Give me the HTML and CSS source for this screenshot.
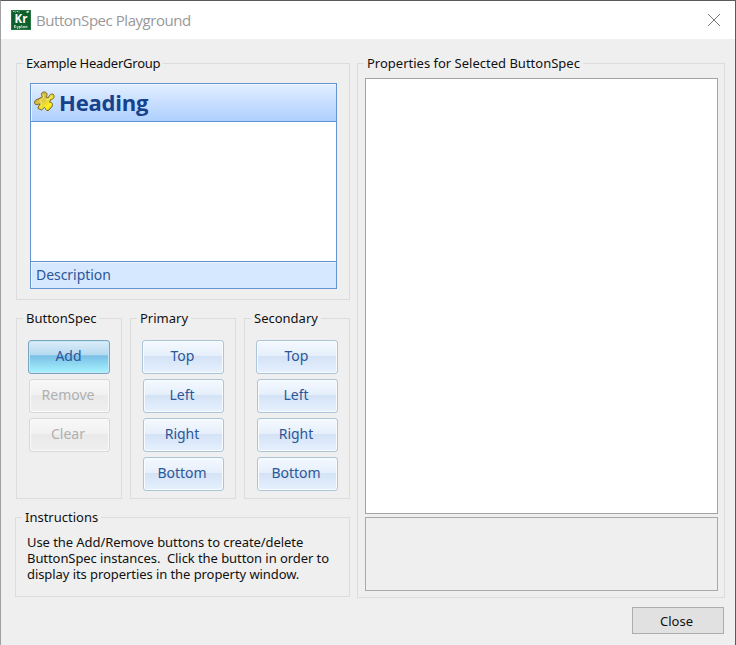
FILE: index.html
```html
<!DOCTYPE html>
<html lang="en">
<head>
<meta charset="utf-8">
<title>ButtonSpec Playground</title>
<link rel="stylesheet" href="styles.css">
</head>
<body>
<div class="window">
  <header class="titlebar">
    <svg class="app-icon" width="20" height="20" viewBox="0 0 20 20">
      <rect width="20" height="20" fill="#0d602c"/>
      <rect x=".5" y=".5" width="19" height="19" fill="none" stroke="#287443"/>
      <path d="M2 1.500H3.500M4.200 2H5M5.700 1.500H7M7.600 2H8.500M15.500 1.500H18M15.500 2.500H17.500" stroke="#d5e5da" stroke-width=".9"/>
      <text x="10" y="13" font-size="11.500" text-anchor="middle">Kr</text>
      <path d="M3.500 15V18M5 15L3.800 16.500L5 18M6 16V17.500M7.300 16L6.300 19M8.300 16V19M8.300 16.300H9.500V17.700H8.500M10.800 15V17.700H11.700M12.500 16.300H13.600V17.700H12.500ZM14.800 18V16.300H16V18" fill="none" stroke="#e8f2eb" stroke-width=".7"/>
    </svg>
    <h1 class="title">ButtonSpec Playground</h1>
    <svg class="close-x" width="12" height="12" viewBox="0 0 12 12"><path d="M0 0L12 12M12 0L0 12" stroke="#777" fill="none"/></svg>
  </header>
  <main class="content">
    <div class="left">
      <section class="group example">
        <h2 class="legend l-example">Example HeaderGroup</h2>
        <div class="header-group">
          <div class="heading">
            <svg width="21" height="21" viewBox="0 0 21 21">
              <defs><linearGradient id="gold" x1="0" y1="0" x2="1" y2="1"><stop offset="0" stop-color="#b99b35"/><stop offset=".45" stop-color="#dfc947"/><stop offset=".75" stop-color="#fff21b"/><stop offset="1" stop-color="#9a8728"/></linearGradient></defs>
              <path d="M8.500 5.500C6 3 8 .8 10.500 1C13.500 1.500 13.500 4 12 6L14.500 6.700C15 4 17.500 2 19.500 3.500C21 6 19.500 8.500 16.500 8.800L15.700 11.300C18.500 11 19 13.500 18 15.500L14.500 19.500C11.500 20.500 12 17 10.500 16.500C9 16.500 9 18.800 7.500 19L4 17.500C3.500 15.500 6 14.500 5.800 13C4.500 12.500 3.500 14.500 1.500 13.500C-.5 11.500 1 8.500 4 8.200Z" fill="url(#gold)" stroke="#75651f"/>
              <path d="M9 3L9.500 7L5.500 10L8 11L7 16M12 9L15 8L18 5" fill="none" stroke="#fff5a0" stroke-width=".9" opacity=".7"/>
            </svg>
            <span class="heading-text">Heading</span>
          </div>
          <div class="canvas"></div>
          <div class="description"><span>Description</span></div>
        </div>
      </section>
      <div class="columns">
        <section class="group">
          <h2 class="legend">ButtonSpec</h2>
          <div class="buttons">
            <button class="btn wide active">Add</button>
            <button class="btn" disabled>Remove</button>
            <button class="btn" disabled>Clear</button>
          </div>
        </section>
        <section class="group">
          <h2 class="legend">Primary</h2>
          <div class="buttons">
            <button class="btn wide">Top</button>
            <button class="btn">Left</button>
            <button class="btn">Right</button>
            <button class="btn">Bottom</button>
          </div>
        </section>
        <section class="group">
          <h2 class="legend">Secondary</h2>
          <div class="buttons">
            <button class="btn wide">Top</button>
            <button class="btn">Left</button>
            <button class="btn">Right</button>
            <button class="btn">Bottom</button>
          </div>
        </section>
      </div>
      <section class="group instructions">
        <h2 class="legend">Instructions</h2>
        <p>Use the Add/Remove buttons to create/delete<br>ButtonSpec instances.&nbsp; Click the button in order to<br>display its properties in the property window.</p>
      </section>
    </div>
    <section class="group properties">
      <h2 class="legend">Properties for Selected ButtonSpec</h2>
      <div class="grid-box"></div>
      <div class="help-box"></div>
    </section>
  </main>
  <footer class="footer"><button class="close-btn">Close</button></footer>
</div>
</body>
</html>
```

FILE: styles.css
```css
* { box-sizing: border-box; }
body { margin: 0; font-family: "Noto Sans", sans-serif; color: #111; }
h1, h2, p { margin: 0; font-weight: 400; }
button { font-family: inherit; padding: 0; }

.window {
  width: 736px; height: 645px; overflow: hidden;
  display: flex; flex-direction: column;
  background: #efefef;
  border: solid #5b595d; border-width: 1px 1px 0;
  border-left-color: #a09fa4;
}
.titlebar {
  height: 38px; flex: none; background: #fff;
  display: flex; align-items: center; padding: 0 15px 0 10px;
}
.app-icon { display: block; }
.app-icon text { font-family: "Open Sans", sans-serif; font-weight: 700; fill: #fff; }
.title { font: 400 15px/20px "Open Sans", sans-serif; letter-spacing: -.45px; color: #999; margin-left: 5px; white-space: nowrap; }
.close-x { margin-left: auto; }

.content { display: flex; height: 558px; flex: none; padding: 24px 10px 0 14px; gap: 8px; }
.left { width: 335px; display: flex; flex-direction: column; gap: 18px; }
.group { border: 1px solid #dcdcdc; }
.example { height: 237px; margin-left: 1px; }
.legend {
  width: max-content; height: 16px; margin: -9px 0 0 6px; padding: 0 3px;
  background: #efefef; font-size: 13px; line-height: 16px; white-space: nowrap;
}
.l-example { letter-spacing: -.25px; }
.header-group {
  width: 307px; height: 206px; margin: 12px 0 0 13px;
  display: flex; flex-direction: column;
  border: 1px solid #6593cf; background: #fff;
}
.heading {
  height: 38px; flex: none; display: flex; align-items: center; padding-left: 3px; gap: 4px;
  background: linear-gradient(#e3efff, #c8deff 50%, #afd0ff);
  box-shadow: inset 1px 1px #edf5ff; border-bottom: 1px solid #6593cf;
}
.heading svg { margin-top: -2px; }
.heading-text { font: 700 22px/30px "Open Sans", sans-serif; letter-spacing: -.2px; color: #15428b; padding-bottom: 2px; }
.canvas { flex: 1; }
.description {
  height: 27px; flex: none; padding-left: 5px; border-top: 1px solid #6593cf;
  background: #d6e8ff; box-shadow: inset 1px 1px #edf5ff;
  font-size: 14px; line-height: 25px; letter-spacing: -.05px; color: #2b579a;
}

.columns { display: grid; grid-template-columns: 106px 106px 106px; gap: 8px; height: 182px; margin-left: 1px; }
.buttons { display: flex; flex-direction: column; align-items: flex-end; gap: 5px; padding: 14px 11px 0 0; }
.btn {
  width: 81px; height: 34px; padding: 0 3px 2px 0;
  border: 1px solid #abc4d8; border-radius: 3px;
  background: linear-gradient(#f5f9ff, #e5effb 46%, #d3e2f5 47%, #e7f1ff);
  box-shadow: inset 0 0 0 1px #f9fcff;
  color: #2b579a; font-size: 14px; line-height: 20px;
}
.btn.wide { width: 82px; padding-right: 1px; }
.btn.active {
  border-color: #7ba5bf;
  background: linear-gradient(#dcedf9, #b4d9f0 44%, #79bfe6 46%, #a8f4ff);
  box-shadow: inset 0 0 0 1px #c4e8f5;
}
.btn:disabled {
  border-color: #d7d7d7; color: #b0b0b0;
  background: linear-gradient(#f8f8f8, #f1f1f1 46%, #e9e9e9 47%, #efefef);
  box-shadow: inset 0 0 0 1px #fafafa;
}
.instructions { height: 80px; }
.instructions p { font-size: 13px; line-height: 16px; letter-spacing: -.07px; margin: 9px 0 0 11px; white-space: nowrap; }

.properties { width: 368px; height: 535px; margin-left: -1px; }
.properties .grid-box { height: 436px; margin: 7px 6px 0 7px; border: 1px solid #a3a3a3; background: #fff; }
.properties .help-box { height: 74px; margin: 3px 6px 0 7px; border: 1px solid #a9a9a9; }

.footer { padding: 10px 11px 0; display: flex; justify-content: flex-end; }
.close-btn { width: 92px; height: 27px; border: 1px solid #adadad; background: #e1e1e1; color: #111; font-size: 13px; padding-right: 3px; }
```
